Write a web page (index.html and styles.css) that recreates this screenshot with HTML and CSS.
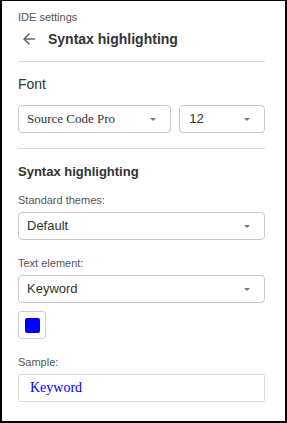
FILE: index.html
```html
<!DOCTYPE html>
<html>
<head>
<meta charset="utf-8">
<link rel="stylesheet" href="styles.css">
</head>
<body>
<div class="panel">
  <div class="crumb">IDE settings</div>
  <div class="title-row">
    <svg class="back" viewBox="0 0 24 24" width="18" height="18"><path d="M20 11H7.83l5.59-5.59L12 4l-8 8 8 8 1.41-1.41L7.83 13H20v-2z" fill="#666"/></svg>
    <span class="title">Syntax highlighting</span>
  </div>
  <div class="divider"></div>
  <div class="section-font">Font</div>
  <div class="font-row">
    <div class="select family"><span class="serif">Source Code Pro</span><i class="caret"></i></div>
    <div class="select size"><span>12</span><i class="caret"></i></div>
  </div>
  <div class="divider second"></div>
  <div class="section-head">Syntax highlighting</div>
  <div class="label">Standard themes:</div>
  <div class="select wide"><span>Default</span><i class="caret"></i></div>
  <div class="label spaced">Text element:</div>
  <div class="select wide"><span>Keyword</span><i class="caret"></i></div>
  <div class="color-btn"><span class="swatch"></span></div>
  <div class="label spaced">Sample:</div>
  <div class="sample">Keyword</div>
</div>
</body>
</html>
```
FILE: styles.css
```css
html, body {
  margin: 0;
  padding: 0;
  background: #fff;
}
.panel {
  box-sizing: border-box;
  width: 287px;
  height: 423px;
  border: 2px solid #000;
  border-top-width: 1px;
  padding: 10px 20px 0 16px;
  font-family: "Liberation Sans", Arial, sans-serif;
  color: #333;
}
.crumb {
  font-size: 11px;
  line-height: 13px;
  color: #555;
}
.title-row {
  margin-top: 3px;
  height: 24px;
  display: flex;
  align-items: center;
}
.back {
  margin-left: 2px;
  margin-right: 10px;
  flex: none;
}
.title {
  font-size: 14px;
  font-weight: bold;
  line-height: 24px;
  color: #333;
}
.divider {
  margin-top: 10px;
  height: 1px;
  background: #dcdcdc;
}
.divider.second {
  margin-top: 15px;
}
.section-font {
  margin-top: 12px;
  font-size: 14px;
  line-height: 21px;
  color: #333;
}
.font-row {
  margin-top: 10px;
  display: flex;
  gap: 8px;
}
.select {
  box-sizing: border-box;
  height: 28px;
  border: 1px solid #c8c8c8;
  border-radius: 4px;
  padding: 0 14px 0 8px;
  display: flex;
  align-items: center;
  justify-content: space-between;
  font-size: 13px;
  line-height: 26px;
  color: #333;
}
.family {
  width: 154px;
}
.size {
  width: 86px;
  padding-left: 9px;
}
.wide {
  margin-top: 5px;
}
.serif {
  font-family: "Liberation Serif", "Times New Roman", serif;
}
.caret {
  width: 0;
  height: 0;
  border-left: 3px solid transparent;
  border-right: 3px solid transparent;
  border-top: 3px solid #777;
}
.section-head {
  margin-top: 12px;
  font-size: 13px;
  font-weight: bold;
  line-height: 21px;
  color: #333;
}
.label {
  margin-top: 12px;
  font-size: 11px;
  line-height: 13px;
  color: #555;
}
.label.spaced {
  margin-top: 17px;
}
.color-btn {
  box-sizing: border-box;
  margin-top: 8px;
  width: 28px;
  height: 28px;
  border: 1px solid #cfcfcf;
  border-radius: 3px;
  display: flex;
  align-items: center;
  justify-content: center;
}
.swatch {
  width: 15px;
  height: 15px;
  background: #0000ff;
  border-radius: 2px;
}
.sample {
  box-sizing: border-box;
  margin-top: 5px;
  height: 28px;
  border: 1px solid #dcdcdc;
  border-radius: 2px;
  padding-left: 11px;
  font-family: "Liberation Serif", "Times New Roman", serif;
  font-size: 14px;
  line-height: 26px;
  color: #0000ff;
}
```
